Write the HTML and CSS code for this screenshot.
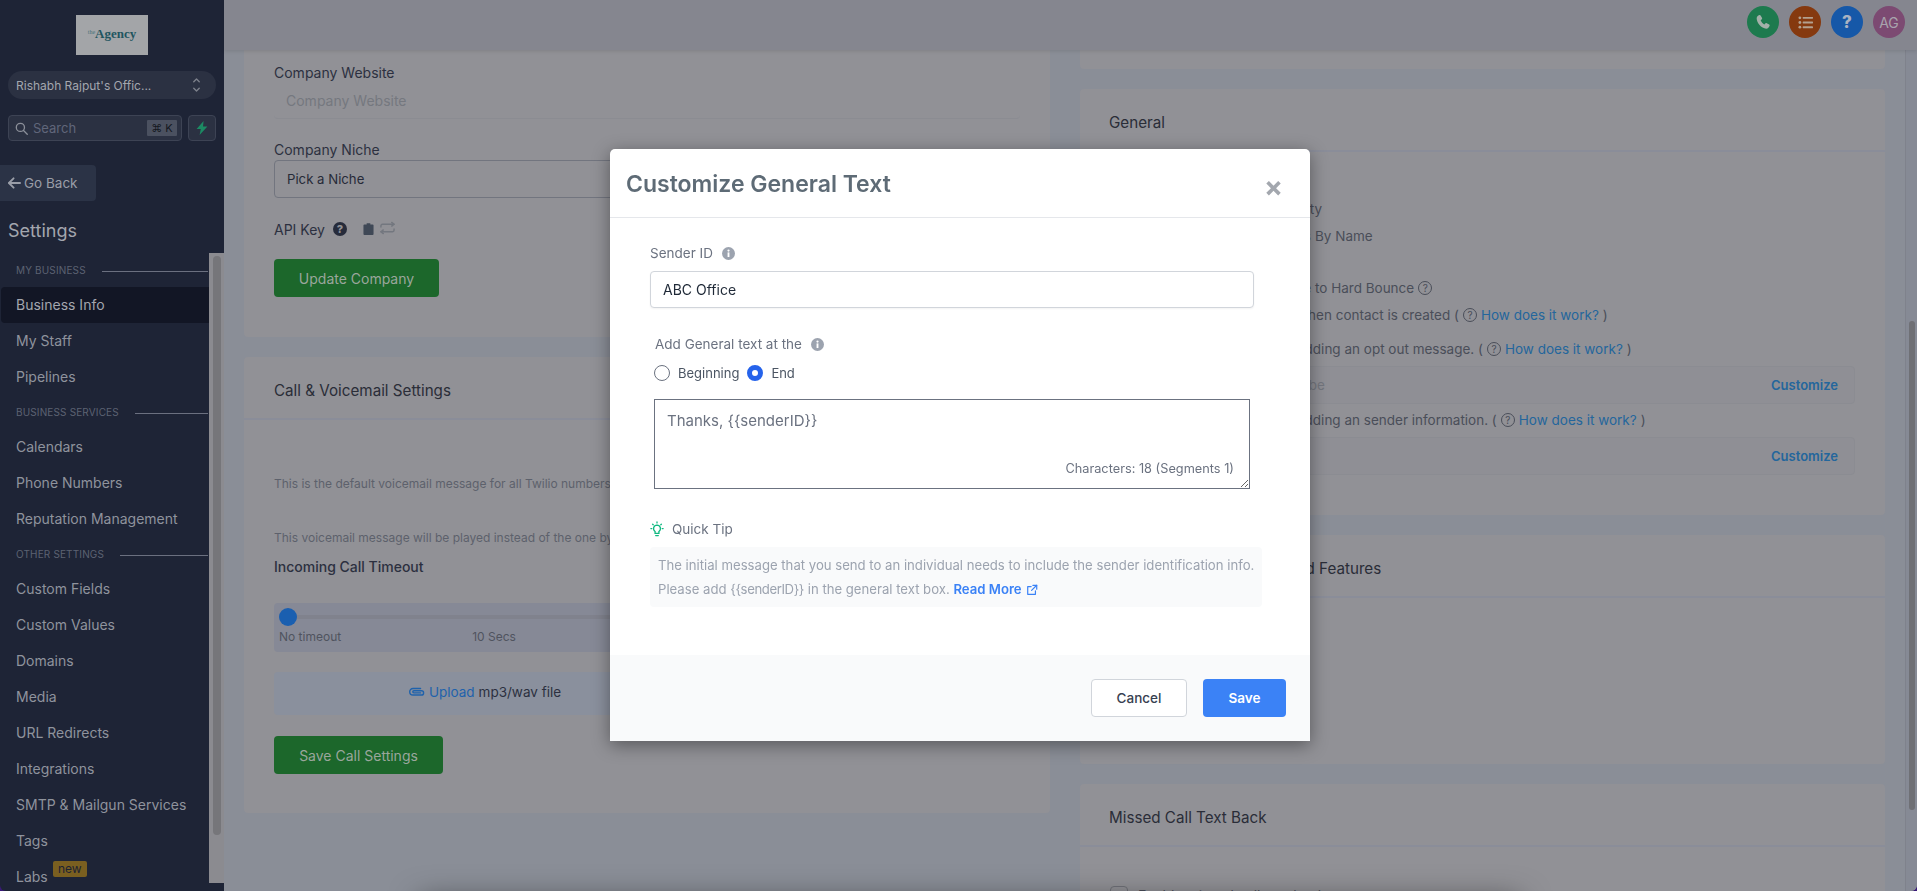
FILE: index.html
```html
<!DOCTYPE html>
<html lang="en">
<head>
<meta charset="UTF-8" />
<title>Settings - Business Info</title>
<link rel="stylesheet" href="styles.css">
</head>
<body>
<div class="app">
  <!-- Sidebar -->
  <aside class="sidebar">
    <div class="logo"><span class="logo-the">the</span><span class="logo-name">Agency</span></div>
    <div class="switcher">
      <span>Rishabh Rajput's Offic...</span>
      <svg class="switcher-icon" viewBox="0 0 12 16" fill="none" stroke="#7d818b" stroke-width="1.5" stroke-linecap="round" stroke-linejoin="round"><path d="M3 4.500l3-3 3 3"/><path d="M3 11.500l3 3 3-3"/></svg>
    </div>
    <div class="search-row">
      <div class="search">
        <svg class="search-icon" viewBox="0 0 14 14" fill="none" stroke="#8b8f99" stroke-width="1.4" stroke-linecap="round"><circle cx="5.8" cy="5.8" r="4.4"/><path d="M9.2 9.2l4 4"/></svg>
        <span class="search-text">Search</span>
        <span class="kbd">⌘ K</span>
      </div>
      <div class="bolt-btn">
        <svg viewBox="0 0 12 14" width="12" height="14"><path fill="#1c8a63" d="M7.6 0L0.6 8h4.2L3.6 14l7.8-8.6H7z"/></svg>
      </div>
    </div>
    <div class="go-back">
      <svg viewBox="0 0 14 12" width="13" height="12" fill="none" stroke="#9a9ea8" stroke-width="2" stroke-linecap="round" stroke-linejoin="round"><path d="M6 1L1 6l5 5"/><path d="M1.5 6H13"/></svg>
      <span>Go Back</span>
    </div>
    <div class="sidebar-title">Settings</div>
    <nav class="nav">
      <div class="nav-label"><span>MY BUSINESS</span><i></i></div>
      <a class="nav-item active">Business Info</a>
      <a class="nav-item">My Staff</a>
      <a class="nav-item">Pipelines</a>
      <div class="nav-label"><span>BUSINESS SERVICES</span><i></i></div>
      <a class="nav-item">Calendars</a>
      <a class="nav-item">Phone Numbers</a>
      <a class="nav-item">Reputation Management</a>
      <div class="nav-label"><span>OTHER SETTINGS</span><i></i></div>
      <a class="nav-item">Custom Fields</a>
      <a class="nav-item">Custom Values</a>
      <a class="nav-item">Domains</a>
      <a class="nav-item">Media</a>
      <a class="nav-item">URL Redirects</a>
      <a class="nav-item">Integrations</a>
      <a class="nav-item">SMTP &amp; Mailgun Services</a>
      <a class="nav-item">Tags</a>
      <a class="nav-item">Labs<span class="badge-new">new</span></a>
      <div class="nav-track"><div class="nav-thumb"></div></div>
    </nav>
  </aside>

  <main class="main">
    <!-- Barre du haut -->
    <header class="topbar">
      <div class="round green">
        <svg viewBox="0 0 24 24" width="16" height="16"><path fill="#a3b0a9" d="M6.6 1.6c.7-.3 1.4 0 1.8.6l2.2 3.8c.3.6.2 1.3-.3 1.8L8.500 9.400c1 2.500 3.100 5 5.600 6.300l1.700-1.700c.5-.5 1.200-.6 1.800-.3l3.700 2.200c.6.400.9 1.100.6 1.800-.8 2.400-2.500 4.300-5 4.300C9.300 22 2.500 13.300 2.500 6.500c0-2.300 1.800-4.100 4.100-4.900z"/></svg>
      </div>
      <div class="round orange">
        <svg viewBox="0 0 16 16" width="15" height="15" fill="#b3a08f"><circle cx="2" cy="3" r="1.500"/><circle cx="2" cy="8" r="1.500"/><circle cx="2" cy="13" r="1.500"/><rect x="5" y="2" width="11" height="2" rx=".5"/><rect x="5" y="7" width="11" height="2" rx=".5"/><rect x="5" y="12" width="11" height="2" rx=".5"/></svg>
      </div>
      <div class="round blue"><span class="round-q">?</span></div>
      <div class="round purple">AG</div>
    </header>

    <div class="scroll-area">
      <div class="content">
        <!-- Colonne gauche -->
        <div class="col">
          <section class="card company-card">
            <label class="field-label">Company Website</label>
            <div class="input-disabled">Company Website</div>
            <label class="field-label niche-label">Company Niche</label>
            <div class="select-box">Pick a Niche</div>
            <div class="api-row">
              <span>API Key</span>
              <span class="q-solid">?</span>
              <svg class="clip-icon" viewBox="0 0 12 14" width="11" height="14"><path fill="#3f4856" d="M4 0.800h4v1.200h2.500a1 1 0 0 1 1 1v9.500a1 1 0 0 1-1 1h-9a1 1 0 0 1-1-1V3a1 1 0 0 1 1-1H4z"/></svg>
              <svg class="swap-icon" viewBox="0 0 16 14" width="15" height="14" fill="none" stroke="#73777f" stroke-width="1.500" stroke-linecap="round" stroke-linejoin="round"><path d="M1 6V4.500a1.500 1.500 0 0 1 1.500-1.500H15"/><path d="M12.500 1L15 3l-2.500 2"/><path d="M15 8v1.500a1.500 1.500 0 0 1-1.500 1.500H1"/><path d="M3.500 9L1 11l2.500 2"/></svg>
            </div>
            <button class="btn-green update-btn">Update Company</button>
          </section>

          <section class="card">
            <div class="card-header">Call &amp; Voicemail Settings</div>
            <div class="call-body">
              <p class="help-text">This is the default voicemail message for all Twilio numbers in this account.</p>
              <p class="help-text second">This voicemail message will be played instead of the one by default.</p>
              <div class="timeout-title">Incoming Call Timeout</div>
              <div class="slider-box">
                <div class="slider-track"><span class="slider-knob"></span></div>
                <div class="slider-labels"><span>No timeout</span><span>10 Secs</span><span>20 Secs</span></div>
              </div>
              <div class="upload-box">
                <svg viewBox="0 0 18 10" width="16" height="10" fill="none" stroke="#1f62ac" stroke-width="1.600" stroke-linecap="round"><path d="M13 6H5.500a1.200 1.200 0 0 1 0-2.400h8.500a2.400 2.400 0 0 1 0 4.800H4.500a3.700 3.700 0 0 1 0-7.400H13"/></svg>
                <span class="upload-link">Upload</span>
                <span>mp3/wav file</span>
              </div>
              <button class="btn-green save-btn">Save Call Settings</button>
            </div>
          </section>
        </div>

        <!-- Colonne droite -->
        <div class="col">
          <section class="card stub-card"></section>

          <section class="card">
            <div class="card-header">General</div>
            <div class="general-body">
              <div class="opt first"><span class="lead lead-a">Show contact activity</span></div>
              <div class="opt tight"><span class="lead lead-b">Sort contacts</span><span>By Name</span></div>
              <div class="opt gap-lg"><span class="lead lead-b">Mark email as invalid due</span><span>to Hard Bounce</span><span class="q-line">?</span></div>
              <div class="opt tight"><span class="lead lead-c">Add contact to DND</span><span>when contact is created (</span><span class="q-line">?</span><a class="how">How does it work?</a><span>)</span></div>
              <div class="opt gap-md"><span class="lead lead-c">Enable compliance by</span><span>adding an opt out message. (</span><span class="q-line">?</span><a class="how">How does it work?</a><span>)</span></div>
              <div class="custom-box first-box"><span class="custom-text">Text STOP to unsubscribe</span><a class="customize">Customize</a></div>
              <div class="opt gap-xs"><span class="lead lead-c">Enable compliance by</span><span>adding an sender information. (</span><span class="q-line">?</span><a class="how">How does it work?</a><span>)</span></div>
              <div class="custom-box"><span class="custom-text">Thanks, ABC Office</span><a class="customize">Customize</a></div>
            </div>
          </section>

          <section class="card features-card">
            <div class="card-header"><span class="features-title">Enable or Disable Advanced Features</span></div>
          </section>

          <section class="card missed-card">
            <div class="card-header">Missed Call Text Back</div>
            <div class="missed-body"><span class="fake-check"></span><span>Enable missed call text back</span></div>
          </section>
        </div>
      </div>
      <div class="page-track"><div class="page-thumb"></div></div>
    </div>
  </main>
</div>

<!-- Ombre en bas de page -->
<div class="bottom-shadow"></div>

<!-- Modale -->
<div class="modal">
  <div class="modal-header">
    <h2>Customize General Text</h2>
    <span class="modal-close">×</span>
  </div>
  <div class="modal-body">
    <div class="m-label">Sender ID <svg class="info" viewBox="0 0 14 14"><circle cx="7" cy="7" r="7" fill="#9ca3af"/><circle cx="7" cy="3.800" r="1.200" fill="#fff"/><rect x="6" y="5.800" width="2" height="5" fill="#fff"/></svg></div>
    <input class="m-input" type="text" value="ABC Office" />
    <div class="m-group">
      <div class="m-label">Add General text at the <svg class="info" viewBox="0 0 14 14"><circle cx="7" cy="7" r="7" fill="#9ca3af"/><circle cx="7" cy="3.800" r="1.200" fill="#fff"/><rect x="6" y="5.800" width="2" height="5" fill="#fff"/></svg></div>
      <div class="radios">
        <span class="radio"></span><span class="radio-text">Beginning</span>
        <span class="radio on"></span><span class="radio-text">End</span>
      </div>
      <div class="msg-wrap">
        <textarea class="msg">Thanks, {{senderID}}</textarea>
        <span class="msg-count">Characters: 18 (Segments 1)</span>
      </div>
    </div>
    <div class="tip-title">
      <svg viewBox="0 0 16 18" width="14" height="16" fill="none" stroke="#10b981" stroke-width="1.500" stroke-linecap="round"><path d="M8 4.500a4 4 0 0 0-2.200 7.300V14h4.400v-2.200A4 4 0 0 0 8 4.500z"/><path d="M6.500 16.500h3"/><path d="M8 1v1M1 8.500h1M14 8.500h1M3 3.500l.7.7M13 3.500l-.7.7"/></svg>
      <span>Quick Tip</span>
    </div>
    <div class="tip-box">
      The initial message that you send to an individual needs to include the sender identification info.<br>
      Please add <span class="tip-var">{{senderID}}</span> in the general text box. <a class="read-more">Read More
      <svg viewBox="0 0 14 14" width="12" height="12" fill="none" stroke="#3b82f6" stroke-width="1.400" stroke-linecap="round" stroke-linejoin="round"><path d="M6 3H2v9h9V8"/><path d="M8 1.500h4.500V6"/><path d="M12.500 1.500L6.500 7.500"/></svg></a>
    </div>
  </div>
  <div class="modal-footer">
    <button class="btn-cancel">Cancel</button>
    <button class="btn-save">Save</button>
  </div>
</div>
</body>
</html>
```

FILE: styles.css
```css
/* ========== Global ========== */
html, body {
  margin: 0;
  height: 100%;
  overflow: hidden;
  font-family: Inter, "Noto Sans", sans-serif;
  font-size: 14px;
  background: #3a1a78;
}
p { margin: 0; }
.app {
  display: flex;
  height: 891px;
  overflow: hidden;
  border-radius: 0 0 6px 6px;
}

/* Sidebar */
.sidebar {
  width: 224px;
  flex-shrink: 0;
  background: #1e2436;
  color: #8f939d;
  padding: 15px 0 8px;
  box-sizing: border-box;
  display: flex;
  flex-direction: column;
}
.logo {
  width: 72px;
  height: 40px;
  margin: 0 auto;
  background: #a3a5a8;
  display: flex;
  align-items: center;
  justify-content: center;
  font-family: "Liberation Serif", serif;
  font-weight: bold;
  color: #1f5560;
  padding-bottom: 2px;
  box-sizing: border-box;
}
.logo-the { font-size: 6px; font-weight: normal; color: #47727a; margin-bottom: 4px; }
.logo-name { font-size: 13px; }
.switcher {
  height: 28px;
  margin: 16px 8px 0;
  padding: 0 14px 0 8px;
  border-radius: 14px;
  background: #2b3142;
  color: #a3a6ae;
  font-size: 12px;
  display: flex;
  align-items: center;
  justify-content: space-between;
}
.switcher-icon { width: 11px; height: 16px; }
.search-row {
  display: flex;
  gap: 6px;
  margin: 16px 8px 0;
  height: 26px;
}
.search {
  width: 174px;
  box-sizing: border-box;
  background: #2b3142;
  border: 1px solid #3d4354;
  border-radius: 4px;
  display: flex;
  align-items: center;
  padding: 0 4px 0 6px;
}
.search-icon { width: 13px; height: 13px; margin-right: 5px; }
.search-text { flex: 1; color: #60667a; font-size: 13px; }
.kbd {
  background: #4b5160;
  color: #14181f;
  width: 30px;
  height: 16px;
  line-height: 16px;
  text-align: center;
  font-size: 11px;
  border-radius: 1px;
}
.bolt-btn {
  width: 28px;
  box-sizing: border-box;
  background: #2b3142;
  border: 1px solid #3d4354;
  border-radius: 4px;
  display: flex;
  align-items: center;
  justify-content: center;
}
.go-back {
  width: 96px;
  height: 36px;
  margin-top: 24px;
  padding: 0 0 1px 8px;
  box-sizing: border-box;
  background: #2b3346;
  border-radius: 0 4px 4px 0;
  color: #9a9ea8;
  font-size: 13.5px;
  display: flex;
  align-items: center;
  gap: 3px;
}
.sidebar-title {
  margin: 16px 0 8px 8px;
  font-size: 18px;
  line-height: 28px;
  color: #a3a6ae;
}
.nav {
  flex: 1;
  min-height: 0;
  overflow: hidden;
  position: relative;
  padding-right: 15px;
}
.nav-label {
  height: 34px;
  padding: 0 1px 0 16px;
  display: flex;
  align-items: center;
  gap: 16px;
  font-size: 10px;
  letter-spacing: 0.15px;
  color: #5c6272;
}
.nav-label i {
  flex: 1;
  height: 1px;
  background: #6b7080;
  margin-top: 2px;
}
.nav-item {
  display: block;
  height: 36px;
  line-height: 36px;
  margin-left: 1px;
  padding-left: 15px;
  border-radius: 4px 0 0 4px;
  position: relative;
}
.nav-item.active {
  background: #121625;
  color: #a3a6ae;
}
.badge-new {
  position: absolute;
  left: 52px;
  top: 2px;
  height: 16px;
  line-height: 15px;
  padding: 0 5px;
  background: #7a5f20;
  color: #1c2233;
  font-size: 12px;
  border-radius: 2px;
}
.nav-track {
  position: absolute;
  top: 0;
  right: 0;
  bottom: 0;
  width: 15px;
  background: #8b8b90;
}
.nav-thumb {
  width: 8px;
  height: 579px;
  margin: 3px 0 0 4px;
  background: #76767a;
  border-radius: 4px;
}

/* Contenu principal */
.main {
  flex: 1;
  min-width: 0;
  display: flex;
  flex-direction: column;
  background: #8a8e97;
}
.topbar {
  height: 50px;
  flex-shrink: 0;
  background: #85868f;
  box-shadow: 0 1px 4px rgba(0, 0, 0, 0.12);
  display: flex;
  justify-content: flex-end;
  align-items: flex-start;
  gap: 10px;
  padding: 6px 12px 0 0;
  box-sizing: border-box;
  position: relative;
  z-index: 2;
}
.round {
  width: 32px;
  height: 32px;
  border-radius: 50%;
  display: flex;
  align-items: center;
  justify-content: center;
}
.round.green { background: #1d7a4e; }
.round.orange { background: #85390f; }
.round.blue { background: #1658a8; }
.round.purple { background: #7c4a72; color: #a8a3ad; font-size: 14px; }
.round-q { color: #a9b3c2; font-weight: 800; font-size: 17px; }
.scroll-area {
  flex: 1;
  min-height: 0;
  display: flex;
}
.content {
  flex: 1;
  min-width: 0;
  padding: 0 20px;
  display: grid;
  grid-template-columns: 806px 805px;
  column-gap: 30px;
  overflow: hidden;
}
.col {
  display: flex;
  flex-direction: column;
  gap: 20px;
}
.card {
  background: #919196;
  border-radius: 4px;
  color: #2c3040;
}
.card-header {
  height: 63px;
  box-sizing: border-box;
  padding: 22px 30px 0;
  font-size: 15.2px;
  line-height: 24px;
  color: #2a2d38;
  border-bottom: 2px solid #8a8d99;
}
.col + .col .card-header { padding-left: 29px; }
.page-track {
  width: 12px;
  box-sizing: border-box;
  border-left: 1px solid #7f828c;
  background: #868a95;
  flex-shrink: 0;
}
.page-thumb {
  width: 6px;
  height: 489px;
  margin: 271px 0 0 3px;
  background: #6f7075;
  border-radius: 3px;
}

/* Carte entreprise */
.company-card {
  padding: 13px 30px 40px;
  border-radius: 0 0 4px 4px;
}
.field-label {
  display: block;
  line-height: 20px;
  color: #2c3040;
}
.input-disabled {
  margin-top: 2px;
  height: 34px;
  line-height: 32px;
  padding-left: 12px;
  box-sizing: border-box;
  border-bottom: 1px solid #8b8c92;
  border-radius: 4px;
  color: #75787f;
}
.niche-label { margin-top: 21px; }
.select-box {
  height: 38px;
  line-height: 36px;
  padding-left: 12px;
  box-sizing: border-box;
  border: 1px solid #72757f;
  border-radius: 4px;
  font-size: 13.2px;
  color: #262a38;
}
.api-row {
  margin-top: 21px;
  height: 20px;
  display: flex;
  align-items: center;
}
.q-solid {
  width: 14px;
  height: 14px;
  margin-left: 8px;
  border-radius: 50%;
  background: #262b3b;
  color: #919196;
  font-size: 11px;
  font-weight: 800;
  line-height: 14px;
  text-align: center;
}
.clip-icon { margin-left: 16px; }
.swap-icon { margin: -2px 0 0 6px; }
.btn-green {
  display: block;
  background: #1c672b;
  color: #9aa69c;
  border: none;
  border-radius: 4px;
  height: 38px;
  font-family: inherit;
  font-size: 14px;
  padding: 0;
}
.update-btn { margin-top: 20px; width: 165px; }

/* Carte appels */
.call-body { padding: 56px 30px 39px; }
.help-text {
  font-size: 12px;
  line-height: 16px;
  color: #5d616c;
  white-space: nowrap;
}
.help-text.second { margin-top: 38px; }
.timeout-title {
  margin-top: 11px;
  line-height: 20px;
  font-weight: 500;
  color: #2c3040;
}
.slider-box {
  margin-top: 26px;
  height: 49px;
  box-sizing: border-box;
  padding: 12px 5px 0;
  background: #868996;
  border-radius: 4px;
}
.slider-track {
  height: 4px;
  background: #80828d;
  position: relative;
}
.slider-knob {
  position: absolute;
  left: 0;
  top: -7px;
  width: 18px;
  height: 18px;
  border-radius: 50%;
  background: #1a5fb0;
}
.slider-labels {
  display: flex;
  gap: 131px;
  margin-top: 10px;
  font-size: 12px;
  line-height: 16px;
  color: #50545f;
}
.upload-box {
  margin-top: 20px;
  width: 422px;
  height: 43px;
  background: #8a909d;
  border-radius: 4px;
  display: flex;
  align-items: center;
  justify-content: center;
  gap: 4px;
  font-size: 13.5px;
  color: #2c3040;
  padding-bottom: 3px;
  box-sizing: border-box;
}
.upload-link { color: #1f62ac; }
.save-btn { margin-top: 21px; width: 169px; }

/* Carte generale */
.stub-card { height: 19px; border-radius: 0 0 4px 4px; }
.general-body {
  padding: 47px 30px 40px;
  font-size: 13.5px;
  color: #4a4e59;
}
.opt {
  display: flex;
  align-items: center;
  height: 20px;
  white-space: nowrap;
  gap: 4px;
}
.opt.tight { margin-top: 7px; }
.opt.gap-lg { margin-top: 32px; }
.opt.gap-md { margin-top: 14px; }
.opt.gap-xs { margin-top: 6px; }
.lead {
  display: block;
  text-align: right;
  flex-shrink: 0;
  box-sizing: border-box;
}
.lead-a { width: 212px; margin-right: -4px; }
.lead-b { width: 201px; }
.lead-c { width: 183px; }
.q-line {
  width: 12px;
  height: 12px;
  border: 1px solid #4a4e59;
  border-radius: 50%;
  font-size: 10px;
  line-height: 12px;
  text-align: center;
}
.how { color: #24669c; }
.custom-box {
  margin-top: 7px;
  height: 38px;
  box-sizing: border-box;
  background: #8f8f95;
  border: 1px solid #8b8c92;
  border-radius: 4px;
  padding: 0 16px 0 48px;
  display: flex;
  align-items: center;
  justify-content: space-between;
  color: #73767e;
}
.customize { color: #24669c; font-weight: 600; font-size: 13px; }

.features-card { height: 229px; }
.features-title { white-space: nowrap; margin-left: 4px; }
.missed-card { flex: 1; border-radius: 4px 4px 0 0; }
.missed-body {
  padding: 39px 30px 0;
  display: flex;
  align-items: center;
  gap: 10px;
  color: #4a4e59;
}
.fake-check {
  width: 16px;
  height: 16px;
  border: 1px solid #6f7178;
  border-radius: 4px;
}
.bottom-shadow {
  position: fixed;
  left: 420px;
  top: 900px;
  width: 1100px;
  height: 40px;
  box-shadow: 0 0 30px rgba(0, 0, 0, 0.5);
}

/* Modale */
.modal {
  position: fixed;
  left: 610px;
  top: 149px;
  width: 700px;
  height: 592px;
  background: #fff;
  border-radius: 5px 5px 0 0;
  box-shadow: 0 4px 18px rgba(0, 0, 0, 0.4);
  display: flex;
  flex-direction: column;
}
.modal-header {
  height: 69px;
  flex-shrink: 0;
  box-sizing: border-box;
  border-bottom: 1px solid #e5e7eb;
  padding: 18px 27px 0 16px;
  display: flex;
  justify-content: space-between;
  align-items: flex-start;
}
.modal-header h2 {
  margin: 0;
  font-size: 23px;
  line-height: 34px;
  font-weight: 600;
  color: #5e6b76;
}
.modal-close {
  margin-top: 3px;
  font-size: 28px;
  line-height: 34px;
  font-weight: 700;
  color: #a3a7ae;
}
.modal-body {
  flex: 1;
  padding: 25px 0 0 40px;
}
.m-label {
  height: 20px;
  line-height: 20px;
  font-size: 13.5px;
  color: #6b7280;
  display: flex;
  align-items: center;
  gap: 9px;
}
.info { width: 13px; height: 13px; }
.m-input {
  display: block;
  margin-top: 8px;
  width: 604px;
  height: 37px;
  box-sizing: border-box;
  padding: 0 12px;
  border: 1px solid #d1d5db;
  border-radius: 4px;
  box-shadow: 0 1px 2px rgba(0, 0, 0, 0.05);
  font-family: inherit;
  font-size: 14px;
  color: #1f2937;
}
.m-group { margin: 26px 0 0 4px; }
.m-group .m-label { margin-left: 1px; }
.radios {
  margin-top: 9px;
  height: 20px;
  display: flex;
  align-items: center;
  font-size: 13px;
  color: #4b5563;
}
.radio {
  width: 16px;
  height: 16px;
  box-sizing: border-box;
  border: 1px solid #6b7280;
  border-radius: 50%;
}
.radio.on {
  border: 5px solid #2563eb;
  background: #fff;
}
.radio-text { margin: 0 8px; }
.msg-wrap {
  position: relative;
  margin-top: 16px;
  width: 596px;
  height: 90px;
}
.msg {
  display: block;
  width: 596px;
  height: 90px;
  box-sizing: border-box;
  padding: 9px 12px;
  border: 1px solid #6b7280;
  border-radius: 0;
  font-family: inherit;
  font-size: 15px;
  line-height: 24px;
  color: #6b7280;
  outline: none;
}
.msg-count {
  position: absolute;
  right: 16px;
  bottom: 12px;
  font-size: 12.75px;
  line-height: 16px;
  color: #6b7280;
}
.tip-title {
  margin-top: 30px;
  height: 20px;
  display: flex;
  align-items: center;
  gap: 8px;
  font-size: 13.5px;
  color: #6b7280;
}
.tip-box {
  margin-top: 8px;
  width: 612px;
  height: 60px;
  box-sizing: border-box;
  padding: 6px 8px;
  background: #f9fafb;
  border-radius: 4px;
  font-size: 13.15px;
  line-height: 24px;
  color: #9ca3af;
  white-space: nowrap;
}
.tip-var { letter-spacing: -0.4px; }
.read-more { color: #3b82f6; font-weight: 600; }
.read-more svg { vertical-align: -2px; margin-left: 1px; }
.modal-footer {
  height: 86px;
  flex-shrink: 0;
  box-sizing: border-box;
  background: #f9fafb;
  padding: 24px 24px 0 0;
  display: flex;
  justify-content: flex-end;
  gap: 16px;
}
.btn-cancel, .btn-save {
  height: 38px;
  border-radius: 4px;
  font-family: inherit;
  font-size: 13.5px;
  font-weight: 500;
}
.btn-cancel {
  width: 96px;
  background: #fff;
  border: 1px solid #d1d5db;
  color: #374151;
}
.btn-save {
  width: 83px;
  background: #3b82f6;
  border: none;
  color: #fff;
  font-weight: 600;
}
```
